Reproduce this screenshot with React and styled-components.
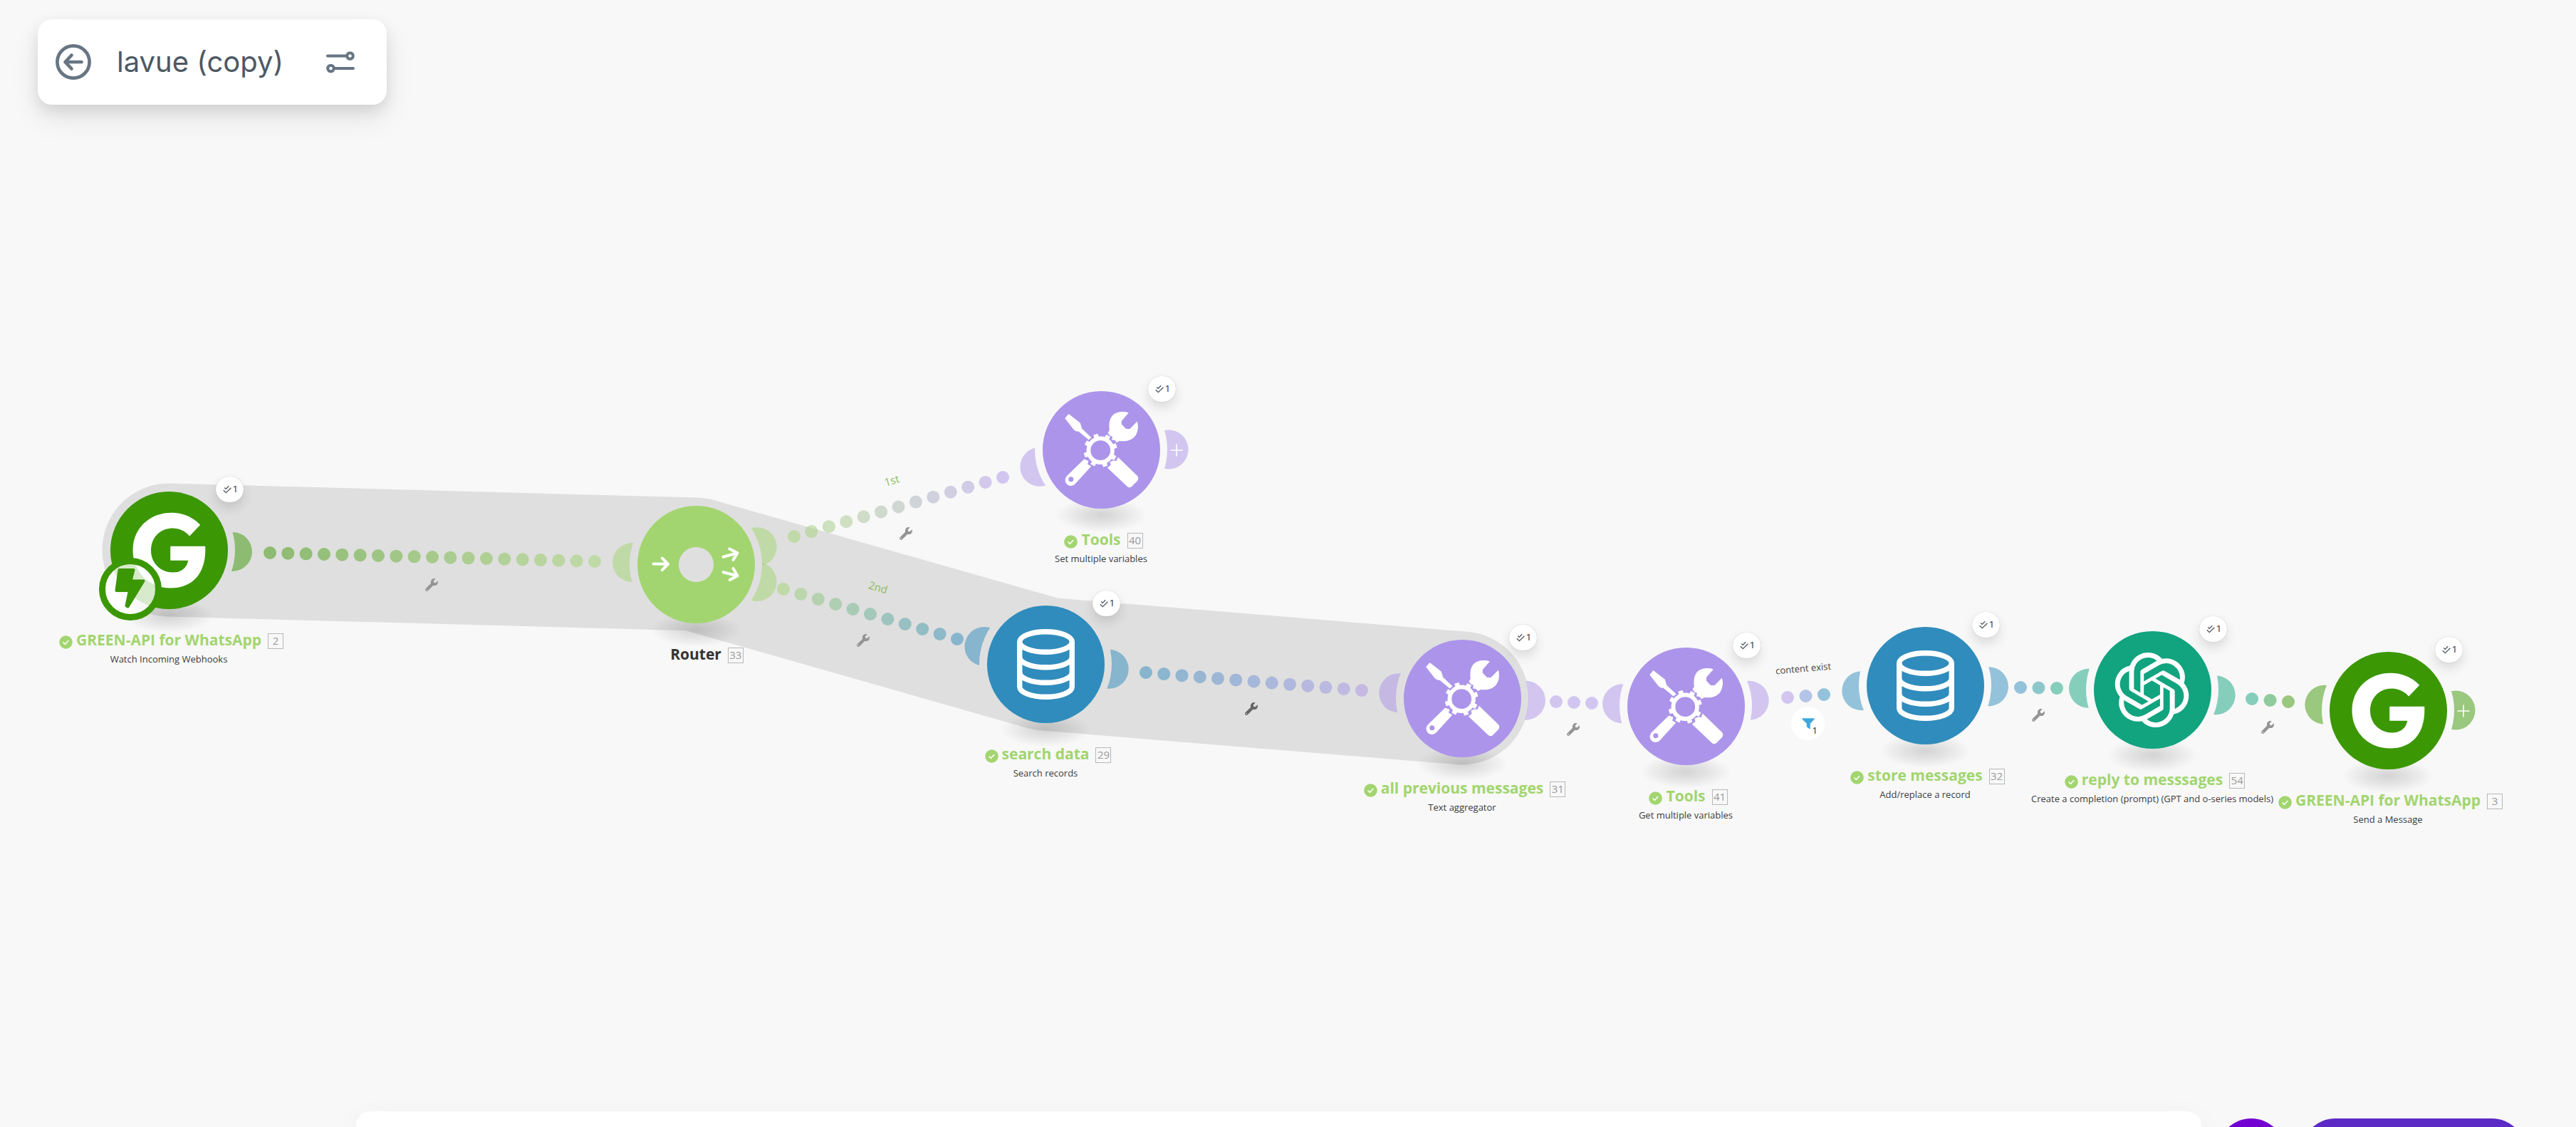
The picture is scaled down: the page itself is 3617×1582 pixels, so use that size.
import React from "react";
import styled, { createGlobalStyle } from "styled-components";
import { SiOpenai } from "react-icons/si";
import { FaWrench } from "react-icons/fa";

const GlobalStyle = createGlobalStyle`
  * { box-sizing: border-box; }
  html, body { margin: 0; background: #f8f8f8; }
  button { border: 0; padding: 0; background: none; color: inherit; font: inherit; cursor: pointer; }
`;

const colors = {
  green: "#3b9703",
  lime: "#a2d56f",
  violet: "#ac94ea",
  blue: "#308cbc",
  teal: "#12a37f",
  band: "#dfdfdf",
};

const Page = styled.div`
  position: relative;
  display: flex;
  flex-direction: column;
  justify-content: space-between;
  align-items: stretch;
  height: 100vh;
  overflow: hidden;
  background: #f8f8f8;
  font-family: "Open Sans", "Noto Sans", sans-serif;
`;

const Toolbar = styled.header`
  position: relative;
  display: flex;
  align-items: center;
  align-self: flex-start;
  gap: 36px;
  min-width: 490px;
  height: 120px;
  margin: 27px 0 0 53px;
  padding: 0 44px 0 25px;
  border-radius: 20px;
  background: #ffffff;
  box-shadow: 0 20px 40px rgba(0, 0, 0, 0.08), 0 8px 20px rgba(0, 0, 0, 0.1);
`;

const ToolbarButton = styled.button`
  display: flex;
  color: #677583;
`;

const ScenarioName = styled.h1`
  flex: 1;
  margin: 0;
  color: #4d5863;
  font-family: Inter, sans-serif;
  font-size: 40px;
  font-weight: 400;
  line-height: 48px;
  white-space: nowrap;
`;

const Canvas = styled.main`
  position: absolute;
  inset: 0;
`;

const Wires = styled.svg`
  position: absolute;
  inset: 0;
  width: 100%;
  height: 100%;
`;

const Module = styled.section`
  position: absolute;
  left: ${(p) => p.$x - 240}px;
  top: ${(p) => p.$y - 82}px;
  display: flex;
  flex-direction: column;
  align-items: center;
  width: 480px;
`;

const Shadow = styled.div`
  position: absolute;
  top: 150px;
  left: 176px;
  width: 128px;
  height: 48px;
  border-radius: 50%;
  background: radial-gradient(closest-side, rgba(0, 0, 0, 0.15), rgba(0, 0, 0, 0.08) 50%, rgba(0, 0, 0, 0));
`;

const Disc = styled.button`
  position: relative;
  width: 165px;
  height: 165px;
  border-radius: 50%;
  background: ${(p) =>
    p.$hollow
      ? `radial-gradient(circle, transparent 24px, ${p.$color} 25px)`
      : p.$color};
  color: #ffffff;
`;

const DiscIcon = styled.svg`
  display: block;
  width: 100%;
  height: 100%;
`;

const Trigger = styled.span`
  position: absolute;
  left: -16px;
  top: 93px;
  display: flex;
  width: 88px;
  height: 88px;
  border: 9px solid ${colors.green};
  border-radius: 50%;
  background: rgba(255, 255, 255, 0.8);
`;

const RunBadge = styled.button`
  position: absolute;
  left: 306px;
  top: -21px;
  display: flex;
  align-items: center;
  justify-content: center;
  gap: 3px;
  width: 39px;
  height: 36px;
  border-radius: 18px;
  background: #ffffff;
  box-shadow: 0 0 1px rgba(0, 0, 0, 0.3), 0 8px 16px rgba(0, 0, 0, 0.12);
  color: #4d5560;
  font-family: Inter, sans-serif;
  font-size: 12px;
  font-weight: 500;
  line-height: 16px;
`;

const AddButton = styled.button`
  position: absolute;
  left: 332px;
  top: 55px;
  display: flex;
  align-items: center;
  justify-content: center;
  width: 28px;
  height: 55px;
  color: #ffffff;
`;

const Label = styled.div`
  display: grid;
  grid-template-columns: 1fr auto 1fr;
  align-items: center;
  width: 100%;
  height: 22px;
  margin-top: 34px;
`;

const StatusIcon = styled.svg`
  grid-column: 1;
  justify-self: end;
  width: 19px;
  height: 19px;
  margin: 2px 5px 0 0;
`;

const Title = styled.h2`
  grid-column: 2;
  margin: 0;
  padding-bottom: 4px;
  color: ${(p) => p.$color};
  font-size: 21px;
  font-weight: 700;
  line-height: 18px;
  white-space: nowrap;
`;

const Id = styled.span`
  grid-column: 3;
  display: flex;
  justify-content: center;
  width: 22px;
  height: 22px;
  margin-left: 9px;
  border: 1px solid #b8b8b8;
  color: #999999;
  font-size: 15px;
  font-weight: 400;
  line-height: 18px;
`;

const Subtitle = styled.p`
  margin: 4px 0 0;
  color: #3c3c3c;
  font-size: 13px;
  line-height: 20px;
  white-space: nowrap;
`;

const WrenchButton = styled.button`
  position: absolute;
  left: ${(p) => p.$x - 9}px;
  top: ${(p) => p.$y - 9}px;
  display: flex;
  color: ${(p) => (p.$active ? "#666666" : "#949494")};
`;

const RouteLabel = styled.span`
  position: absolute;
  left: ${(p) => p.$x}px;
  top: ${(p) => p.$y}px;
  transform: translate(-50%, -50%) rotate(${(p) => p.$angle}deg);
  color: ${(p) => p.$color};
  font-size: ${(p) => p.$size}px;
  line-height: 20px;
  white-space: nowrap;
`;

const FilterButton = styled.button`
  position: absolute;
  left: ${(p) => p.$x - 23}px;
  top: ${(p) => p.$y - 23}px;
  display: flex;
  align-items: center;
  justify-content: center;
  width: 47px;
  height: 47px;
  border-radius: 50%;
  background: #ffffff;
`;

const FilterCount = styled.span`
  position: absolute;
  right: 10px;
  bottom: 6px;
  color: #222222;
  font-size: 13px;
  line-height: 16px;
`;

const Dock = styled.footer`
  position: relative;
  display: flex;
  align-items: flex-start;
  gap: 22px;
  height: 22px;
  padding: 0 70px 0 500px;
`;

const DockPanel = styled.div`
  flex: 1;
  height: 120px;
  border-radius: 20px;
  background: #ffffff;
  box-shadow: 0 8px 40px rgba(0, 0, 0, 0.04);
`;

const DockButton = styled.button`
  width: ${(p) => p.$width}px;
  height: 96px;
  margin-top: 10px;
  border-radius: 48px;
  background: ${(p) => p.$color};
`;

const GLogo = () => (
  <path
    fill="#fff"
    d="M43.7-35.7 28.7-20C22.5-27 14-31 5-31-12.5-31-25.5-18-25.5 0S-12 31 5.500 31C17 31 25 24.500 26.700 14.300H1.700V-5.700H50.700C52.500 30 35 53 2 53-28 53-51 30-51 0S-28-52.700 3-52.700C19-52.700 33-47 43.700-35.700Z"
  />
);

const DatabaseIcon = () => (
  <g fill="none" stroke="#fff" strokeWidth="7.4">
    <ellipse cx="0" cy="-31.5" rx="36.8" ry="14.3" />
    <path d="M-36.8-31.5V31.5A36.8 14.3 0 0 0 36.8 31.5V-31.500" />
    <path d="M-36.8-10A36.8 14.3 0 0 0 36.8-10M-36.8 11.5A36.8 14.3 0 0 0 36.8 11.5" />
  </g>
);

const ToolsIcon = () => (
  <g fill="#fff">
    <path d="M-46-50.500-51.300-44.300-38.700-28.300Q-36-25.500-32-25.700L-17.700-14-14-17.300-27.300-29.700-29.700-37.700Z" />
    <path d="M38.300-52 28.300-40.500V-36L34.500-29.500H40L50.300-40C53-31 50.500-23 46.700-18.500 41-12.500 33-11.500 25.500-12.500L21.500-10.300 19-13.500 14.500-14 15.500-18.500 12-20 9-23.700 11.300-27.700C10.500-34 10.500-43 15.700-48.500 21-54 31-54.500 38.300-52Z" />
    <path
      fillRule="evenodd"
      d="M-24.300 13-48.700 36.700C-52 41-51.500 46-47.500 49-44 51.500-40 50.500-37 48L-14.300 23-19.500 20-18 15.500ZM-42.700 37.800A3.500 3.500 0 1 1-42.700 44.800 3.500 3.500 0 0 1-42.700 37.800Z"
    />
    <path d="M23.300 10.300 50.500 36.500Q53 39.500 50.500 43.500L42.500 51.500Q39.500 54 36.300 51.500L8.300 25 13 21.500 12 17 16.500 15 21 15.500Z" />
    <g transform="translate(-1.300 .700)">
      <circle r="16.800" fill="none" stroke="#fff" strokeWidth="5.800" />
      {[0, 1, 2, 3, 4, 5, 6, 7].map((i) => (
        <rect key={i} x="17" y="-3.300" width="6.500" height="6.600" rx=".6" transform={`rotate(${-17 + i * 45})`} />
      ))}
    </g>
  </g>
);

const RouterIcon = () => (
  <g fill="none" stroke="#fff" strokeWidth="4" strokeLinecap="round" strokeLinejoin="round">
    <path d="M-60-1-39.500-.700M-47.700-9-39.500-.700-47.700 7.700" />
    <path d="M38-10.700 58-16.300M47-22 58-16.300 52-6.500" />
    <path d="M38 10.700 58 15.700M52 5.500 58 15.700 47.300 21.500" />
  </g>
);

const OpenAiIcon = () => <SiOpenai x="-53.5" y="-52.5" size={105} fill="#fff" />;

const icons = {
  g: GLogo,
  database: DatabaseIcon,
  tools: ToolsIcon,
  router: RouterIcon,
  openai: OpenAiIcon,
};

const modules = [
  { key: "watch", x: 237, y: 772, icon: "g", color: colors.green, title: "GREEN-API for WhatsApp", id: 2, sub: "Watch Incoming Webhooks", trigger: true },
  { key: "router", x: 977, y: 792, icon: "router", color: colors.lime, title: "Router", id: 33 },
  { key: "set", x: 1546, y: 631, icon: "tools", color: colors.violet, title: "Tools", id: 40, sub: "Set multiple variables", last: true },
  { key: "search", x: 1468, y: 932, icon: "database", color: colors.blue, title: "search data", id: 29, sub: "Search records" },
  { key: "previous", x: 2053, y: 980, icon: "tools", color: colors.violet, title: "all previous messages", id: 31, sub: "Text aggregator" },
  { key: "get", x: 2367, y: 991, icon: "tools", color: colors.violet, title: "Tools", id: 41, sub: "Get multiple variables" },
  { key: "store", x: 2703, y: 962, icon: "database", color: colors.blue, title: "store messages", id: 32, sub: "Add/replace a record" },
  { key: "reply", x: 3022, y: 968, icon: "openai", color: colors.teal, title: "reply to messsages", id: 54, sub: "Create a completion (prompt) (GPT and o-series models)" },
  { key: "send", x: 3353, y: 997, icon: "g", color: colors.green, title: "GREEN-API for WhatsApp", id: 3, sub: "Send a Message", last: true },
];

const links = [
  { from: "watch", to: "router", start: [379, 776], end: [835, 788], dots: 19, wrench: [606, 821] },
  { from: "router", to: "set", start: [1115, 753], end: [1408, 670], dots: 13, wrench: [1272, 749] },
  { from: "router", to: "search", start: [1100, 827], end: [1344, 897], dots: 11, wrench: [1212, 899] },
  { from: "search", to: "previous", start: [1609, 944], end: [1912, 969], dots: 13, wrench: [1757, 995], active: true },
  { from: "previous", to: "get", start: [2185, 985], end: [2235, 987], dots: 3, wrench: [2209, 1024] },
  { from: "get", to: "store", start: [2510, 979], end: [2561, 975], dots: 3 },
  { from: "store", to: "reply", start: [2837, 965], end: [2888, 966], dots: 3, wrench: [2862, 1004] },
  { from: "reply", to: "send", start: [3162, 981], end: [3213, 985], dots: 3, wrench: [3184, 1021] },
];

const byKey = Object.fromEntries(modules.map((m) => [m.key, m]));

const mix = (a, b, t) => {
  const channel = (hex, i) => parseInt(hex.slice(1 + i * 2, 3 + i * 2), 16);
  const parts = [0, 1, 2].map((i) => Math.round(channel(a, i) * (1 - t) + channel(b, i) * t));
  return `rgb(${parts.join(",")})`;
};

const Lobe = ({ module, toward, distance = 89.5 }) => {
  const dx = toward.x - module.x;
  const dy = toward.y - module.y;
  const length = Math.hypot(dx, dy);
  return (
    <g clipPath={`url(#outside-${module.key})`}>
      <circle
        cx={module.x + (dx / length) * distance}
        cy={module.y + (dy / length) * distance}
        r="27.5"
        fill={module.color}
        opacity="0.5"
      />
    </g>
  );
};

const Dots = ({ link }) =>
  Array.from({ length: link.dots }, (_, i) => {
    const t = i / (link.dots - 1);
    return (
      <circle
        key={i}
        cx={link.start[0] + (link.end[0] - link.start[0]) * t}
        cy={link.start[1] + (link.end[1] - link.start[1]) * t}
        r="9"
        opacity="0.5"
        fill={mix(byKey[link.from].color, byKey[link.to].color, t)}
      />
    );
  });

const bandPoints = ["watch", "router", "search", "previous"]
  .map((key) => `${byKey[key].x},${byKey[key].y}`)
  .join(" ");

const WireLayer = () => (
  <Wires aria-hidden="true">
    <defs>
      {modules.map(({ key, x, y }) => (
        <clipPath id={`outside-${key}`} key={key}>
          <path
            clipRule="evenodd"
            d={`M${x - 150} ${y - 150}h300v300h-300ZM${x - 93} ${y}a93 93 0 1 0 186 0a93 93 0 1 0-186 0Z`}
          />
        </clipPath>
      ))}
    </defs>
    <polyline
      points={bandPoints}
      fill="none"
      stroke={colors.band}
      strokeWidth="187"
      strokeLinecap="round"
      strokeLinejoin="round"
    />
    {links.map((link) => (
      <g key={`${link.from}-${link.to}`}>
        <Lobe module={byKey[link.from]} toward={byKey[link.to]} />
        <Lobe module={byKey[link.to]} toward={byKey[link.from]} />
        <Dots link={link} />
      </g>
    ))}
    {modules
      .filter((m) => m.last)
      .map((m) => (
        <Lobe key={m.key} module={m} toward={{ x: m.x + 100, y: m.y }} distance={95} />
      ))}
  </Wires>
);

const ModuleNode = ({ x, y, icon, color, title, id, sub, trigger, last }) => {
  const Icon = icons[icon];
  const isRouter = icon === "router";
  return (
    <Module $x={x} $y={y}>
      <Shadow />
      <Disc type="button" aria-label={title} $color={color} $hollow={isRouter}>
        <DiscIcon viewBox="-82.5 -82.5 165 165">
          <Icon />
        </DiscIcon>
        {trigger && (
          <Trigger>
            <svg width="70" height="70" viewBox="0 0 70 70">
              <path
                d="M19.500 8H39.500L35.500 23.500H53.500L31.500 59.500 29.500 58.500 34 37H15.500Z"
                fill={colors.green}
                stroke={colors.green}
                strokeWidth="4"
                strokeLinejoin="round"
              />
            </svg>
          </Trigger>
        )}
      </Disc>
      {!isRouter && (
        <RunBadge type="button">
          <svg width="12" height="12" viewBox="0 0 12 12" fill="none" stroke="#4d5560" strokeWidth="1.300">
            <path d="M2.200 3.600 4.200 5.400 8.200 1.200M.800 7.200 4.300 10.600 11.400 3.800" />
          </svg>
          1
        </RunBadge>
      )}
      {last && (
        <AddButton type="button" aria-label="Add module">
          <svg width="18" height="18" viewBox="0 0 18 18" stroke="#fff" strokeWidth="1.600">
            <path d="M9 .500V17.500M.500 9H17.500" />
          </svg>
        </AddButton>
      )}
      <Label>
        {!isRouter && (
          <StatusIcon viewBox="0 0 19 19">
            <circle cx="9.500" cy="9.500" r="9.300" fill={colors.lime} />
            <path d="M5.500 9.500 8.300 12.300 13.300 7" fill="none" stroke="#fff" strokeWidth="1.500" />
          </StatusIcon>
        )}
        <Title $color={isRouter ? "#333333" : colors.lime}>{title}</Title>
        <Id>{id}</Id>
      </Label>
      {sub && <Subtitle>{sub}</Subtitle>}
    </Module>
  );
};

export default function App() {
  return (
    <Page>
      <GlobalStyle />
      <Canvas>
        <WireLayer />
        {modules.map(({ key, ...module }) => (
          <ModuleNode key={key} {...module} />
        ))}
        {links
          .filter((link) => link.wrench)
          .map((link) => (
            <WrenchButton
              key={`${link.from}-${link.to}`}
              type="button"
              aria-label="Link settings"
              $x={link.wrench[0]}
              $y={link.wrench[1]}
              $active={link.active}
            >
              <FaWrench size={18} />
            </WrenchButton>
          ))}
        <RouteLabel $x={1252} $y={674} $angle={-16} $size={15} $color="#8abd5c">1st</RouteLabel>
        <RouteLabel $x={1233} $y={824} $angle={16} $size={15} $color="#8abd5c">2nd</RouteLabel>
        <RouteLabel $x={2532} $y={938} $angle={-5} $size={13} $color="#444444">content exist</RouteLabel>
        <FilterButton type="button" $x={2538} $y={1015}>
          <svg width="18" height="16" viewBox="0 0 18 16">
            <path
              d="M1 1H17L11 7.500V14.500L7.500 12V7.500Z"
              fill="#3fa7de"
              stroke="#3fa7de"
              strokeWidth="1.500"
              strokeLinejoin="round"
            />
          </svg>
          <FilterCount>1</FilterCount>
        </FilterButton>
      </Canvas>
      <Toolbar>
        <ToolbarButton type="button" aria-label="Back">
          <svg
            width="50"
            height="50"
            viewBox="0 0 50 50"
            fill="none"
            stroke="currentColor"
            strokeWidth="4.700"
            strokeLinecap="round"
            strokeLinejoin="round"
          >
            <circle cx="25" cy="25" r="22.600" />
            <path d="M36.500 25H13.500M22.500 15.500 13.500 25 22.500 34.500" />
          </svg>
        </ToolbarButton>
        <ScenarioName>lavue (copy)</ScenarioName>
        <ToolbarButton type="button" aria-label="Scenario options">
          <svg
            width="42"
            height="32"
            viewBox="0 0 42 32"
            fill="none"
            stroke="currentColor"
            strokeWidth="4"
            strokeLinecap="round"
          >
            <path d="M3 7.500H29M13 25H39" />
            <circle cx="34.500" cy="7.500" r="4.300" />
            <circle cx="7.500" cy="25" r="4.300" />
          </svg>
        </ToolbarButton>
      </Toolbar>
      <Dock>
        <DockPanel />
        <DockButton type="button" aria-label="Assistant" $width={96} $color="#7300d2" />
        <DockButton type="button" aria-label="Run" $width={316} $color="#5c2ac4" />
      </Dock>
    </Page>
  );
}
